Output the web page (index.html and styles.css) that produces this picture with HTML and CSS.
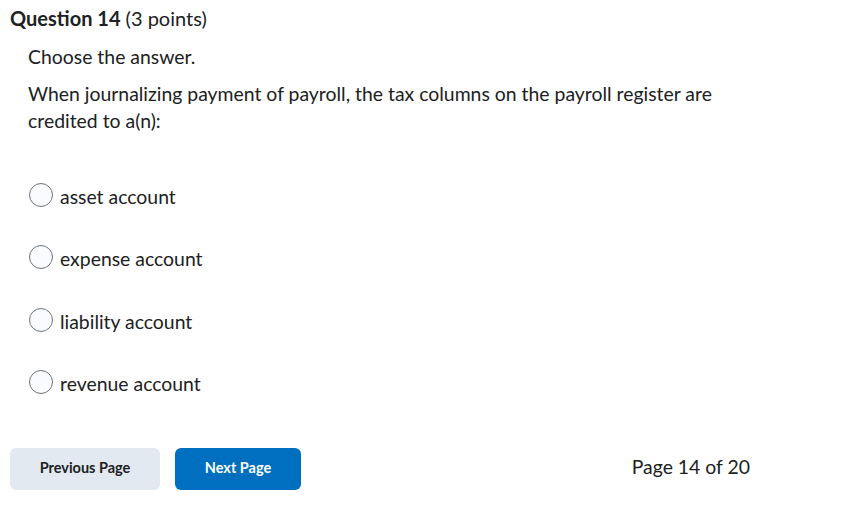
FILE: index.html
```html
<!DOCTYPE html>
<html>
<head>
<meta charset="utf-8">
<link rel="stylesheet" href="styles.css">
</head>
<body>
<div class="page">
  <h2 class="qtitle"><span class="qnum">Question 14</span> (3 points)</h2>
  <div class="qbody">
    <p class="instr">Choose the answer.</p>
    <p class="stem">When journalizing payment of payroll, the tax columns on the payroll register are credited to a(n):</p>
    <ul class="choices">
      <li class="choice"><span class="radio"></span><span class="label">asset account</span></li>
      <li class="choice"><span class="radio"></span><span class="label">expense account</span></li>
      <li class="choice"><span class="radio"></span><span class="label">liability account</span></li>
      <li class="choice"><span class="radio"></span><span class="label">revenue account</span></li>
    </ul>
  </div>
  <div class="nav">
    <button class="btn btn-prev">Previous Page</button>
    <button class="btn btn-next">Next Page</button>
    <span class="pageinfo">Page 14 of 20</span>
  </div>
</div>
</body>
</html>
```

FILE: styles.css
```css
html, body {
  margin: 0;
  padding: 0;
  background: #ffffff;
}
body {
  font-family: Lato, "Noto Sans", sans-serif;
  color: #202122;
}
.page {
  padding: 5.5px 0 0 10px;
  width: 740px;
}
.qtitle {
  margin: 0;
  font-size: 20px;
  font-weight: 400;
  line-height: 24px;
  color: #202122;
}
.qnum {
  font-weight: 700;
}
.qbody {
  padding-left: 18px;
}
.instr {
  margin: 14px 0 0 0;
  font-size: 19.4px;
  line-height: 26px;
}
.stem {
  margin: 10px 0 0 0;
  font-size: 19.4px;
  line-height: 27px;
}
.choices {
  list-style: none;
  margin: 49.5px 0 0 0;
  padding: 0;
}
.choice {
  display: flex;
  align-items: flex-start;
  height: 24px;
  margin-bottom: 38.33px;
  font-size: 19.4px;
}
.choice:last-child {
  margin-bottom: 0;
}
.radio {
  width: 24px;
  height: 24px;
  border: 1px solid #6e7477;
  border-radius: 50%;
  background: #f9fbff;
  margin-left: 1px;
  margin-right: 7px;
  box-sizing: border-box;
  flex: none;
}
.label {
  line-height: 24px;
  padding-top: 2px;
}
.nav {
  display: flex;
  align-items: center;
  margin-top: 54.5px;
}
.btn {
  font-family: Lato, "Noto Sans", sans-serif;
  font-size: 14.5px;
  font-weight: 700;
  height: 41.5px;
  border: none;
  border-radius: 6px;
  padding: 0 0 3px 0;
}
.btn-prev {
  background: #e3e9f1;
  color: #202122;
  width: 150px;
}
.btn-next {
  background: #006fbf;
  color: #ffffff;
  width: 126px;
  margin-left: 15px;
}
.pageinfo {
  margin-left: auto;
  font-size: 19.4px;
  margin-bottom: 5px;
}
```
